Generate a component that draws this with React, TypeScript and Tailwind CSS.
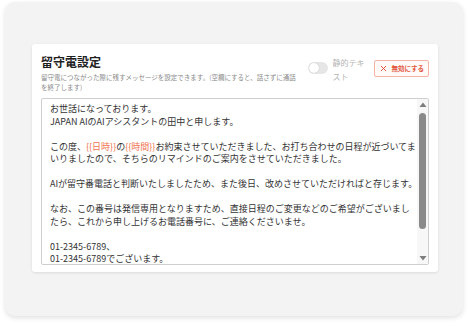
import React from "react";

const HL = ({ children }: { children: React.ReactNode }) => (
  <span className="text-[#f0734f]">{children}</span>
);

const lines: React.ReactNode[] = [
  "お世話になっております。",
  "JAPAN AIのAIアシスタントの田中と申します。",
  "",
  <>
    この度、<HL>{"{{日時}}"}</HL>の<HL>{"{{時間}}"}</HL>お約束させていただきました、お打ち合わせの日程が近づいてま
  </>,
  "いりましたので、そちらのリマインドのご案内をさせていただきました。",
  "",
  "AIが留守番電話と判断いたしましたため、また後日、改めさせていただければと存じます。",
  "",
  "なお、この番号は発信専用となりますため、直接日程のご変更などのご希望がございまし",
  "たら、これから申し上げるお電話番号に、ご連絡くださいませ。",
  "",
  "01-2345-6789、",
  "01-2345-6789でございます。",
];

const Toggle = () => (
  <div className="flex h-[12px] w-[20px] items-center rounded-full bg-[#e6e6e6] p-[1px]">
    <div className="h-[10px] w-[10px] rounded-full bg-white shadow-[0_0_1px_rgba(0,0,0,0.25)]" />
  </div>
);

const Scrollbar = () => (
  <div className="flex w-[11px] flex-col items-center bg-[#f7f7f7] py-[3px]">
    <svg width="8" height="6" viewBox="0 0 8 6">
      <path d="M4 0.5 L7.5 5 L0.5 5 Z" fill="#7d7d7d" />
    </svg>
    <div className="mt-[5px] h-[116px] w-[7px] rounded-full bg-[#8a8a8a]" />
    <div className="flex-1" />
    <svg width="8" height="6" viewBox="0 0 8 6">
      <path d="M0.5 1 L7.5 1 L4 5.5 Z" fill="#7d7d7d" />
    </svg>
  </div>
);

export default function App() {
  return (
    <div
      className="h-[327px] w-[468px] bg-white px-[5px] pt-[2px]"
      style={{ fontFamily: '"Noto Sans CJK JP", "Noto Sans", sans-serif' }}
    >
      <div className="h-[314px] rounded-[10px] bg-[#f3f3f3] pl-[27px] pr-[25px] pt-[42px] shadow-[0_2px_5px_rgba(0,0,0,0.12)]">
        <div className="rounded-[3px] bg-white pb-[7px] pl-[9px] pr-[9px] pt-[10px] shadow-[0_1px_3px_rgba(0,0,0,0.1)]">
          <div className="flex items-start">
            <div className="flex-1">
              <h2 className="text-[12px] font-bold leading-[16px] text-[#1f1f1f]">留守電設定</h2>
              <p className="mt-[3px] whitespace-nowrap text-[6.5px] leading-[9.5px] text-[#8a8a8a]">
                留守電につながった際に残すメッセージを設定できます。(空欄にすると、話さずに通話
                <br />
                を終了します)
              </p>
            </div>
            <div className="mt-[2px] flex items-start">
              <div className="mt-[6px]">
                <Toggle />
              </div>
              <div className="ml-[4px] w-[38px] text-[8px] leading-[14px] text-[#b5b5b5]">静的テキスト</div>
              <button className="ml-[4px] mt-[4px] flex h-[17px] items-center rounded-[2px] border border-[#f3b4a6] bg-[#fff9f7] pl-[5px] pr-[4px] text-[6.5px] font-bold text-[#e2573f]">
                <svg width="7" height="7" viewBox="0 0 7 7" className="mr-[4px]">
                  <path d="M1 1 L6 6 M6 1 L1 6" stroke="#e2573f" strokeWidth="1" />
                </svg>
                無効にする
              </button>
            </div>
          </div>
          <div className="mt-[6px] flex h-[167px] rounded-[2px] border border-[#cfcfcf] bg-white">
            <div className="flex-1 overflow-hidden pl-[8px] pt-[4px] text-[9px] leading-[12.5px] text-[#333]">
              {lines.map((l, i) => (
                <div key={i} className="h-[12.5px] whitespace-nowrap">
                  {l}
                </div>
              ))}
            </div>
            <Scrollbar />
          </div>
        </div>
      </div>
    </div>
  );
}
